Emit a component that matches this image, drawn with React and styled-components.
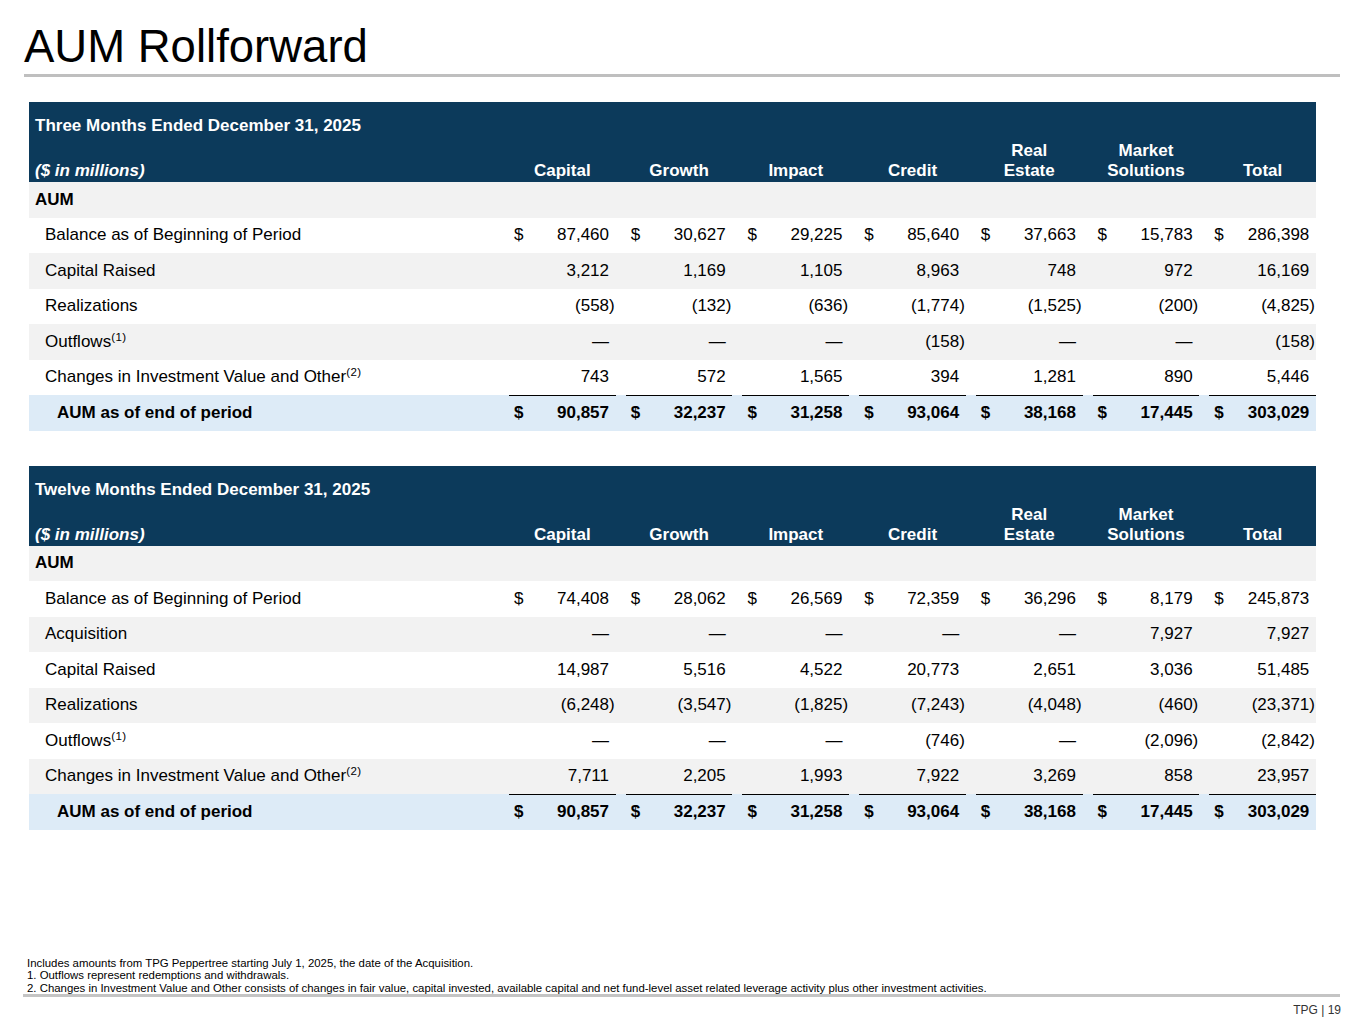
import React from 'react';
import styled, { createGlobalStyle } from 'styled-components';

const GlobalStyle = createGlobalStyle`
  html, body {
    margin: 0;
    padding: 0;
    background: #ffffff;
  }
  body {
    font-family: "Liberation Sans", Arial, Helvetica, sans-serif;
    color: #000;
  }
`;

const COLUMNS = ['Capital', 'Growth', 'Impact', 'Credit', ['Real', 'Estate'], ['Market', 'Solutions'], 'Total'];

const Page = styled.div`
  width: 1365px;
  height: 1024px;
  display: flex;
  flex-direction: column;
  box-sizing: border-box;
`;

const Title = styled.h1`
  margin: 0;
  padding: 21px 0 0 24px;
  font-size: 45.5px;
  line-height: 52px;
  font-weight: 400;
`;

const TitleRule = styled.div`
  height: 3px;
  background: #bfbfbf;
  margin: 1px 25px 0 24px;
`;

const Table = styled.div`
  width: 1287px;
  margin: ${p => p.first ? '25px' : '35px'} 0 0 29px;
`;

const Grid = styled.div`
  display: grid;
  grid-template-columns: 470px repeat(7, 1fr);
  column-gap: 10px;
  font-size: 17px;
`;

const Header = styled(Grid)`
  background: #0c3a5b;
  color: #ffffff;
  font-weight: 700;
  line-height: 20px;
  padding: 14px 0 1px 0;
  row-gap: 5px;
`;

const HeaderTitle = styled.div`
  grid-column: 1 / -1;
  padding-left: 6px;
`;

const Units = styled.div`
  align-self: end;
  padding-left: 6px;
  font-style: italic;
`;

const ColLabel = styled.div`
  align-self: end;
  text-align: center;
`;

const Row = styled(Grid)`
  height: 35.5px;
  background: ${p => p.tone === 'gray' ? '#f2f2f2' : p.tone === 'blue' ? '#ddebf7' : '#ffffff'};
  font-weight: ${p => p.bold ? 700 : 400};
`;

const Label = styled.div`
  display: flex;
  align-items: center;
  padding-left: ${p => p.indent}px;
  white-space: nowrap;
`;

const Cell = styled.div`
  display: flex;
  align-items: center;
  justify-content: space-between;
  padding: 0 1px 0 5px;
  border-top: ${p => p.ruled ? '1.5px solid #000' : '0'};
  box-sizing: border-box;
`;

const Value = styled.span`
  margin-left: auto;
  padding-right: ${p => p.neg ? 0 : 5.7}px;
`;

const Sup = styled.sup`
  font-size: 11.5px;
  letter-spacing: 0.4px;
  line-height: 0;
  vertical-align: 6px;
`;

const Notes = styled.div`
  margin: auto 0 0 27px;
  font-size: 11.4px;
  line-height: 12.5px;
  color: #000;
`;

const FooterRule = styled.div`
  height: 3px;
  background: #c4c4c4;
  margin: 0 25px 0 23px;
`;

const PageNum = styled.div`
  align-self: flex-end;
  margin: 6px 24px 7px 0;
  font-size: 12px;
  line-height: 14px;
  color: #333;
`;

function ValueCell({ v, dollar, ruled }) {
  const neg = v.startsWith('(');
  return (
    <Cell ruled={ruled}>
      {dollar && <span>$</span>}
      <Value neg={neg}>{v}</Value>
    </Cell>
  );
}

function Rollforward({ period, rows, total, first }) {
  return (
    <Table first={first}>
      <Header>
        <HeaderTitle>{period}</HeaderTitle>
        <Units>($ in millions)</Units>
        {COLUMNS.map(c => (
          <ColLabel key={Array.isArray(c) ? c.join(' ') : c}>
            {Array.isArray(c) ? <>{c[0]}<br />{c[1]}</> : c}
          </ColLabel>
        ))}
      </Header>
      <Row tone="gray" bold>
        <Label indent={6}>AUM</Label>
      </Row>
      {rows.map((r, i) => (
        <Row key={r.label} tone={i % 2 ? 'gray' : 'white'}>
          <Label indent={16}>
            <span>
              {r.label}
              {r.note && <Sup>({r.note})</Sup>}
            </span>
          </Label>
          {r.values.map((v, j) => (
            <ValueCell key={j} v={v} dollar={r.dollar} />
          ))}
        </Row>
      ))}
      <Row tone="blue" bold>
        <Label indent={28}>AUM as of end of period</Label>
        {total.map((v, j) => (
          <ValueCell key={j} v={v} dollar ruled />
        ))}
      </Row>
    </Table>
  );
}

const TOTAL = ['90,857', '32,237', '31,258', '93,064', '38,168', '17,445', '303,029'];

const QUARTER = [
  { label: 'Balance as of Beginning of Period', dollar: true, values: ['87,460', '30,627', '29,225', '85,640', '37,663', '15,783', '286,398'] },
  { label: 'Capital Raised', values: ['3,212', '1,169', '1,105', '8,963', '748', '972', '16,169'] },
  { label: 'Realizations', values: ['(558)', '(132)', '(636)', '(1,774)', '(1,525)', '(200)', '(4,825)'] },
  { label: 'Outflows', note: 1, values: ['—', '—', '—', '(158)', '—', '—', '(158)'] },
  { label: 'Changes in Investment Value and Other', note: 2, values: ['743', '572', '1,565', '394', '1,281', '890', '5,446'] }
];

const YEAR = [
  { label: 'Balance as of Beginning of Period', dollar: true, values: ['74,408', '28,062', '26,569', '72,359', '36,296', '8,179', '245,873'] },
  { label: 'Acquisition', values: ['—', '—', '—', '—', '—', '7,927', '7,927'] },
  { label: 'Capital Raised', values: ['14,987', '5,516', '4,522', '20,773', '2,651', '3,036', '51,485'] },
  { label: 'Realizations', values: ['(6,248)', '(3,547)', '(1,825)', '(7,243)', '(4,048)', '(460)', '(23,371)'] },
  { label: 'Outflows', note: 1, values: ['—', '—', '—', '(746)', '—', '(2,096)', '(2,842)'] },
  { label: 'Changes in Investment Value and Other', note: 2, values: ['7,711', '2,205', '1,993', '7,922', '3,269', '858', '23,957'] }
];

export default function App() {
  return (
    <Page>
      <GlobalStyle />
      <Title>AUM Rollforward</Title>
      <TitleRule />
      <Rollforward first period="Three Months Ended December 31, 2025" rows={QUARTER} total={TOTAL} />
      <Rollforward period="Twelve Months Ended December 31, 2025" rows={YEAR} total={TOTAL} />
      <Notes>
        <div>Includes amounts from TPG Peppertree starting July 1, 2025, the date of the Acquisition.</div>
        <div>1. Outflows represent redemptions and withdrawals.</div>
        <div>2. Changes in Investment Value and Other consists of changes in fair value, capital invested, available capital and net fund-level asset related leverage activity plus other investment activities.</div>
      </Notes>
      <FooterRule />
      <PageNum>TPG | 19</PageNum>
    </Page>
  );
}
